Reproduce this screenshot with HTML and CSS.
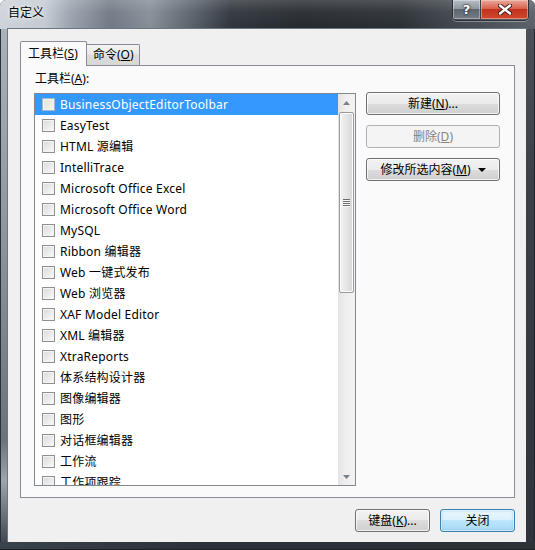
FILE: index.html
```html
<!DOCTYPE html>
<html>
<head>
<meta charset="utf-8">
<link rel="stylesheet" href="styles.css">
</head>
<body>
<div class="window">
  <div class="titlebar">
    <span class="title">自定义</span>
    <div class="caption-btns">
      <div class="cbtn help">?</div>
      <div class="cbtn close">
        <svg width="14" height="11" viewBox="0 0 14 11"><path d="M2 1.5 L12 9.5 M12 1.5 L2 9.5" stroke="#3a1c1c" stroke-width="4.2" stroke-linecap="round"/><path d="M2 1.5 L12 9.5 M12 1.5 L2 9.5" stroke="#ffffff" stroke-width="2.4" stroke-linecap="round"/></svg>
      </div>
    </div>
  </div>
  <div class="frame-mid">
    <div class="frame-l"></div>
    <div class="client">
      <div class="tabs">
        <div class="tab active">工具栏(<u>S</u>)</div>
        <div class="tab">命令(<u>O</u>)</div>
      </div>
      <div class="pane">
        <div class="label">工具栏(<u>A</u>):</div>
        <div class="pane-body">
          <div class="listbox">
            <div class="rows">
              <div class="row selected"><span class="chk"></span>BusinessObjectEditorToolbar</div>
              <div class="row"><span class="chk"></span>EasyTest</div>
              <div class="row"><span class="chk"></span>HTML 源编辑</div>
              <div class="row"><span class="chk"></span>IntelliTrace</div>
              <div class="row"><span class="chk"></span>Microsoft Office Excel</div>
              <div class="row"><span class="chk"></span>Microsoft Office Word</div>
              <div class="row"><span class="chk"></span>MySQL</div>
              <div class="row"><span class="chk"></span>Ribbon 编辑器</div>
              <div class="row"><span class="chk"></span>Web 一键式发布</div>
              <div class="row"><span class="chk"></span>Web 浏览器</div>
              <div class="row"><span class="chk"></span>XAF Model Editor</div>
              <div class="row"><span class="chk"></span>XML 编辑器</div>
              <div class="row"><span class="chk"></span>XtraReports</div>
              <div class="row"><span class="chk"></span>体系结构设计器</div>
              <div class="row"><span class="chk"></span>图像编辑器</div>
              <div class="row"><span class="chk"></span>图形</div>
              <div class="row"><span class="chk"></span>对话框编辑器</div>
              <div class="row"><span class="chk"></span>工作流</div>
              <div class="row"><span class="chk"></span>工作项跟踪</div>
            </div>
            <div class="scrollbar">
              <div class="sb-btn"><svg width="7" height="4" viewBox="0 0 7 4"><path d="M0 4 L3.5 0 L7 4 Z" fill="#7a8089"/></svg></div>
              <div class="sb-track">
                <div class="thumb"><div class="grip"><i></i><i></i><i></i><i></i></div></div>
              </div>
              <div class="sb-btn"><svg width="7" height="4" viewBox="0 0 7 4"><path d="M0 0 L3.5 4 L7 0 Z" fill="#7a8089"/></svg></div>
            </div>
          </div>
          <div class="side-btns">
            <div class="btn">新建(<u>N</u>)...</div>
            <div class="btn disabled">删除(<u>D</u>)</div>
            <div class="btn">修改所选内容(<u>M</u>)<span class="caret"></span></div>
          </div>
        </div>
      </div>
      <div class="footer">
        <div class="btn small">键盘(<u>K</u>)...</div>
        <div class="btn small default">关闭</div>
      </div>
    </div>
    <div class="frame-r"></div>
  </div>
  <div class="frame-b"></div>
</div>
</body>
</html>
```
FILE: styles.css
```css
html, body {
  margin: 0;
  padding: 0;
  background: #ffffff;
}
.window {
  width: 535px;
  height: 550px;
  display: flex;
  flex-direction: column;
  font-family: "Noto Sans", "Noto Sans CJK SC", sans-serif;
  font-size: 12px;
  line-height: 16px;
  color: #000;
  background: #2a3037;
  border-radius: 6px 6px 0 0;
  overflow: hidden;
}
.titlebar {
  height: 29px;
  flex: none;
  display: flex;
  align-items: flex-start;
  background:
    linear-gradient(180deg, rgba(255,255,255,0.18) 0, rgba(255,255,255,0.05) 12px, rgba(0,0,0,0) 29px),
    linear-gradient(90deg, #cdd3da 0, #c3cad2 45px, #9aa3ad 70px, #6f7883 110px, #858d97 150px, #5a626c 190px, #2f353c 230px, #25292f 300px, #2a2f35 400px, #3e444b 450px, #5a6068 535px);
}
.title {
  margin: 5px 0 0 8px;
  color: #000;
  white-space: nowrap;
  text-shadow: 0 0 6px rgba(255,255,255,0.9), 0 0 3px rgba(255,255,255,0.9);
}
.caption-btns {
  margin-left: auto;
  margin-right: 6px;
  display: flex;
  height: 20px;
  border: 1px solid #2b3137;
  border-top: none;
  border-radius: 0 0 5px 5px;
  overflow: hidden;
  box-shadow: 0 1px 0 rgba(255,255,255,0.35);
}
.cbtn {
  height: 19px;
  display: flex;
  align-items: center;
  justify-content: center;
}
.help {
  width: 27px;
  color: #fff;
  font-weight: bold;
  font-size: 13px;
  font-family: "DejaVu Sans", sans-serif;
  text-shadow: 0 0 2px #1a1f25, 0 0 2px #1a1f25;
  background: linear-gradient(180deg, #b7bec6 0, #8f979f 45%, #5e666f 50%, #747c85 100%);
  border-right: 1px solid #3a4047;
  box-shadow: inset 0 0 0 1px rgba(255,255,255,0.35);
}
.close {
  width: 47px;
  background: linear-gradient(180deg, #e9a99c 0, #d7624d 45%, #c1321e 50%, #d1482e 100%);
  box-shadow: inset 0 0 0 1px rgba(255,220,210,0.45);
}
.frame-mid {
  flex: 1;
  display: flex;
}
.frame-l {
  width: 8px;
  flex: none;
  background: linear-gradient(180deg, #a9b1b9 0, #8d959e 40%, #6a727b 80%, #9ca5ae 88%, #414950 100%);
  box-shadow: inset 1px 0 0 #2a3037;
}
.frame-r {
  width: 9px;
  flex: none;
  background: linear-gradient(180deg, #4a5158 0, #394047 30%, #2e343a 100%);
  box-shadow: inset -1px 0 0 #1f252b;
}
.frame-b {
  height: 8px;
  flex: none;
  background: linear-gradient(90deg, #3a424a 0, #2a3037 40%, #2c3238 100%);
  box-shadow: inset 0 -1px 0 #1a1f24;
}
.client {
  flex: 1;
  background: #f0f0f0;
  padding: 12px 11px 10px 12px;
  box-shadow: 0 0 0 1px #6d7780;
  display: flex;
  flex-direction: column;
}
.tabs {
  height: 24px;
  display: flex;
  align-items: flex-end;
}
.tab {
  box-sizing: border-box;
  height: 21px;
  width: 53px;
  padding: 0 0 0 6px;
  white-space: nowrap;
  border: 1px solid #898c95;
  border-left: none;
  border-bottom: none;
  border-radius: 0 2px 0 0;
  background: linear-gradient(180deg, #f3f3f3 0, #e9e9e9 45%, #dcdcdc 50%, #d7d7d7 100%);
  display: flex;
  align-items: center;
}
.tab.active {
  width: 67px;
  height: 25px;
  padding: 0 0 0 7px;
  border-left: 1px solid #898c95;
  border-radius: 2px 2px 0 0;
  background: #fafafa;
  margin-bottom: -1px;
  position: relative;
  z-index: 1;
}
.pane {
  height: 431px;
  border: 1px solid #898c95;
  background: #fafafa;
  display: flex;
  flex-direction: column;
  padding: 0 14px 0 13px;
}
.label {
  margin-top: 5px;
  height: 16px;
  padding-left: 1px;
}
.pane-body {
  margin-top: 6px;
  display: flex;
  gap: 10px;
  align-items: flex-start;
}
.listbox {
  width: 320px;
  height: 391px;
  border: 1px solid #828790;
  background: #fff;
  display: flex;
  overflow: hidden;
}
.rows {
  width: 303px;
  overflow: hidden;
}
.row {
  height: 21px;
  display: flex;
  align-items: center;
  white-space: nowrap;
  color: #000;
  letter-spacing: 0.2px;
}
.row.selected {
  background: #3399ff;
  color: #fff;
}
.chk {
  width: 11px;
  height: 11px;
  margin: 0 5px 0 7px;
  border: 1px solid #8f8f8f;
  background: linear-gradient(135deg, #d9dadb 0, #eceded 60%, #fafafa 100%);
  box-shadow: inset 0 0 0 1px #f4f4f4;
  flex: none;
}
.row.selected .chk {
  border-color: #aab7c4;
  background: linear-gradient(135deg, #e7e3d3 0, #efece2 60%, #f7f6f1 100%);
}
.scrollbar {
  width: 17px;
  display: flex;
  flex-direction: column;
  background: linear-gradient(90deg, #e3e3e3 0, #eeeeee 40%, #f3f3f3 100%);
}
.sb-btn {
  height: 17px;
  flex: none;
  display: flex;
  align-items: center;
  justify-content: center;
}
.sb-track {
  flex: 1;
  padding: 1px 1px 0 1px;
}
.thumb {
  height: 179px;
  border: 1px solid #9b9b9b;
  border-radius: 2px;
  background: linear-gradient(90deg, #f2f2f2 0, #e6e6e6 50%, #d6d6d6 100%);
  box-shadow: inset 0 0 0 1px #fbfbfb;
  display: flex;
  align-items: center;
  justify-content: center;
}
.grip {
  display: flex;
  flex-direction: column;
  gap: 1px;
}
.grip i {
  display: block;
  width: 7px;
  height: 1px;
  background: #6b6b6b;
  box-shadow: 0 1px 0 #fafafa;
}
.side-btns {
  display: flex;
  flex-direction: column;
  gap: 10px;
  margin-top: -1px;
}
.btn {
  width: 132px;
  height: 21px;
  border: 1px solid #707070;
  border-radius: 3px;
  background: linear-gradient(180deg, #f2f2f2 0, #ebebeb 50%, #dddddd 50%, #cfcfcf 100%);
  box-shadow: inset 0 0 0 1px rgba(255,255,255,0.75);
  display: flex;
  align-items: center;
  justify-content: center;
  color: #000;
  white-space: nowrap;
}
.btn.disabled {
  border-color: #adb2b5;
  background: #f4f4f4;
  color: #838383;
  box-shadow: none;
}
.caret {
  width: 0;
  height: 0;
  margin-left: 7px;
  border-left: 4px solid transparent;
  border-right: 4px solid transparent;
  border-top: 4px solid #000;
}
.footer {
  margin-top: auto;
  display: flex;
  justify-content: flex-end;
  gap: 10px;
}
.btn.small {
  width: 73px;
}
.btn.default {
  border-color: #3c7fb1;
  background: linear-gradient(180deg, #eaf6fd 0, #d9f0fc 50%, #bee6fd 50%, #a7d9f5 100%);
  box-shadow: inset 0 0 0 1px rgba(255,255,255,0.6), inset 0 0 2px 1px rgba(80,180,240,0.5);
}
u {
  text-decoration: underline;
  text-underline-offset: 1px;
}
```
